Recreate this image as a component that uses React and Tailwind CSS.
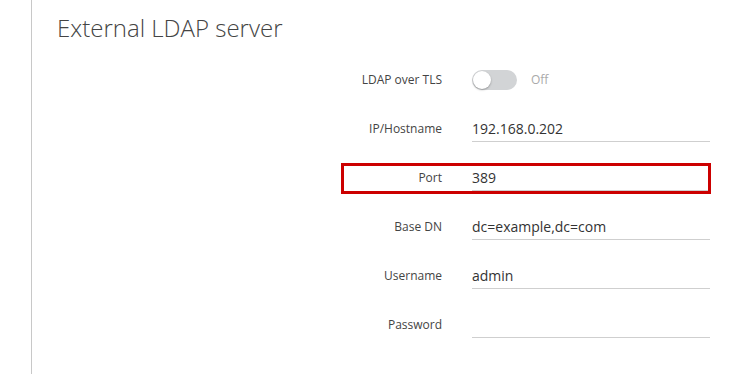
const rows = [
  { label: 'IP/Hostname', value: '192.168.0.202' },
  { label: 'Port', value: '389', highlight: true },
  { label: 'Base DN', value: 'dc=example,dc=com' },
  { label: 'Username', value: 'admin' },
  { label: 'Password', value: '' },
];

function Field({ label, value, highlight }) {
  return (
    <div className="relative flex items-center h-[49px]">
      <span className="w-[98px] text-right text-[12px] text-[#444]">{label}</span>
      <div className="ml-[30px] w-[238px] h-[26px] border-b border-[#cfcfcf] text-[14px] leading-[26px] text-[#333]">
        {value}
      </div>
      {highlight && (
        <span className="absolute left-[-3px] right-[-1px] top-[10px] bottom-[8px] border-[3px] border-[#cc0000] pointer-events-none"></span>
      )}
    </div>
  );
}

export default function App() {
  return (
    <div className="w-[745px] h-[374px] bg-white flex overflow-hidden" style={{ fontFamily: '"Open Sans", "Liberation Sans", sans-serif' }}>
      <div className="w-[31px] shrink-0"></div>
      <div className="flex-1 border-l border-[#c8c8c8] pl-[25px] pt-[12px]">
        <h1 className="text-[24px] font-light leading-[32px] text-[#444]">External LDAP server</h1>

        <div className="ml-[287px] mt-[11px] w-[366px]">
          {/* TLS toggle */}
          <div className="flex items-center h-[49px]">
            <span className="w-[98px] text-right text-[12px] text-[#444]">LDAP over TLS</span>
            <div className="ml-[30px] w-[45px] h-[20px] rounded-full bg-[#d2d4d6] relative">
              <span className="absolute left-[1px] top-[1px] w-[18px] h-[18px] rounded-full bg-white shadow-[0_1px_2px_rgba(0,0,0,0.3)]"></span>
            </div>
            <span className="ml-[14px] text-[12px] text-[#aaa]">Off</span>
          </div>

          {rows.map((r) => (
            <Field key={r.label} {...r} />
          ))}
        </div>
      </div>
    </div>
  );
}
